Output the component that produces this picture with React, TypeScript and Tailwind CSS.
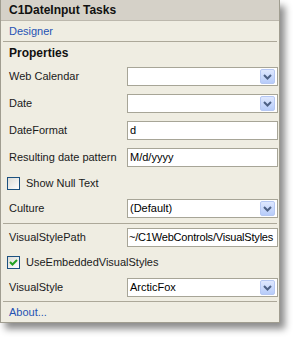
import type { ReactNode } from 'react';

const font = { fontFamily: '"Liberation Sans", Arial, sans-serif' };

function DropButton() {
  return (
    <div className="absolute right-[2px] top-[1px] w-[15px] h-[15px] rounded-[2px] border border-[#b6c8f3] bg-gradient-to-b from-[#dfe8fe] to-[#b7ccf9] flex items-center justify-center">
      <svg width="9" height="6" viewBox="0 0 9 6">
        <path d="M1 1 L4.5 4.5 L8 1" fill="none" stroke="#4d6185" strokeWidth="2" />
      </svg>
    </div>
  );
}

function Field({ value, dropdown }: { value?: string; dropdown?: boolean }) {
  return (
    <div className="relative w-[151px] h-[19px] shrink-0 border border-[#a7a597] bg-white overflow-hidden">
      <span className="block pl-[2px] pr-[18px] leading-[17px] text-[11px] text-black whitespace-nowrap">
        {value}
      </span>
      {dropdown && <DropButton />}
    </div>
  );
}

function Row({ label, children }: { label: string; children: ReactNode }) {
  return (
    <div className="h-[27px] flex items-center pl-[8px] pr-[2px]">
      <span className="w-[118px] shrink-0 text-[11px] text-[#1a1a1a] whitespace-nowrap">{label}</span>
      {children}
    </div>
  );
}

function Check({ label, checked, h }: { label: string; checked?: boolean; h: string }) {
  return (
    <div className={`${h} flex items-center pl-[6px]`}>
      <div className="w-[13px] h-[13px] border border-[#1c5180] bg-gradient-to-br from-[#dcdcd7] to-white flex items-center justify-center">
        {checked && (
          <svg width="9" height="9" viewBox="0 0 9 9">
            <path d="M1 4 L3.5 6.5 L8 2" fill="none" stroke="#21a121" strokeWidth="2" />
          </svg>
        )}
      </div>
      <span className="ml-[6px] text-[11px] text-[#1a1a1a] whitespace-nowrap">{label}</span>
    </div>
  );
}

function Separator() {
  return <div className="h-px mx-[2px] bg-[#aca899]" />;
}

export default function App() {
  return (
    <div className="w-[299px] h-[342px] bg-white" style={font}>
      <div className="w-[280px] border-x border-b border-[#a09d90] bg-[#efede2] shadow-[5px_6px_7px_rgba(0,0,0,0.45)]">
        {/* Title */}
        <div className="h-[21px] bg-[#d5d1c8] border-b border-[#bcb8ad] flex items-center pl-[8px]">
          <span className="text-[12px] font-bold text-[#111]">C1DateInput Tasks</span>
        </div>

        {/* Designer link */}
        <div className="h-[20px] flex items-center pl-[8px]">
          <span className="text-[11px] text-[#2553b4]">Designer</span>
        </div>
        <Separator />

        {/* Properties */}
        <div className="h-[21px] flex items-center pl-[8px]">
          <span className="text-[12px] font-bold text-[#111]">Properties</span>
        </div>

        <Row label="Web Calendar">
          <Field dropdown />
        </Row>
        <Row label="Date">
          <Field dropdown />
        </Row>
        <Row label="DateFormat">
          <Field value="d" />
        </Row>
        <Row label="Resulting date pattern">
          <Field value="M/d/yyyy" />
        </Row>
        <Check label="Show Null Text" h="h-[24px]" />
        <Row label="Culture">
          <Field value="(Default)" dropdown />
        </Row>
        <div className="h-px" />
        <Separator />

        <Row label="VisualStylePath">
          <div className="w-[151px] h-[19px] shrink-0 border border-[#a7a597] bg-white overflow-hidden">
            <span className="block pl-[1px] leading-[17px] text-[11px] tracking-[-0.2px] text-black whitespace-nowrap">
              ~/C1WebControls/VisualStyles
            </span>
          </div>
        </Row>
        <Check label="UseEmbeddedVisualStyles" checked h="h-[23px]" />
        <Row label="VisualStyle">
          <Field value="ArcticFox" dropdown />
        </Row>
        <Separator />

        {/* About link */}
        <div className="h-[20px] flex items-center pl-[8px]">
          <span className="text-[11px] text-[#2553b4]">About...</span>
        </div>
      </div>
    </div>
  );
}
